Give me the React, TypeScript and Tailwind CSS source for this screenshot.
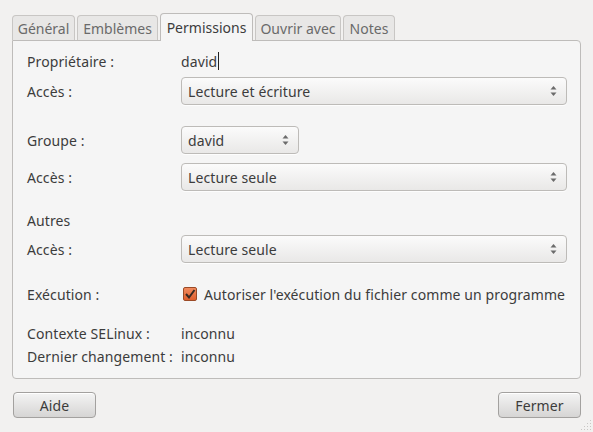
import React from "react";

const font = { fontFamily: '"Noto Sans", "Open Sans", sans-serif' };

function Arrows() {
  return (
    <svg width="7" height="12" viewBox="0 0 7 12" className="shrink-0">
      <path d="M3.5 1 L6.5 4.5 L0.5 4.5 Z" fill="#6b6b6b" />
      <path d="M3.5 11 L6.5 7.5 L0.5 7.5 Z" fill="#6b6b6b" />
    </svg>
  );
}

function Combo({ value, wide = true }: { value: string; wide?: boolean }) {
  return (
    <div
      className={`h-[28px] ${wide ? "w-[386px]" : "w-[118px]"} flex items-center justify-between pl-[6px] pr-[9px] rounded-[4px] border border-[#bdbbb8] bg-gradient-to-b from-[#fbfbfb] to-[#e9e8e7] shadow-[0_1px_0_rgba(255,255,255,0.8)]`}
    >
      <span className="text-[#3c3c3c]">{value}</span>
      <Arrows />
    </div>
  );
}

function Tab({ label, w, active = false }: { label: string; w: string; active?: boolean }) {
  if (active) {
    return (
      <div className={`${w} h-[28px] -mb-px relative z-10 flex items-center justify-center rounded-t-[4px] border border-b-0 border-[#bebcba] bg-[#f5f5f5] text-[#3c3c3c] tracking-normal`}>
        {label}
      </div>
    );
  }
  return (
    <div className={`${w} h-[25px] flex items-center justify-center rounded-t-[4px] border border-b-0 border-[#c8c6c4] bg-[#e8e7e6] text-[#6a6a6a] tracking-normal`}>
      {label}
    </div>
  );
}

function Row({ label, children, h = "h-[24px]" }: { label: string; children?: React.ReactNode; h?: string }) {
  return (
    <div className={`flex items-center ${h}`}>
      <div className="w-[154px] shrink-0">{label}</div>
      {children}
    </div>
  );
}

export default function App() {
  return (
    <div
      className="w-[593px] h-[432px] bg-[#f2f1f0] text-[14px] tracking-[0.1px] text-[#3c3c3c] overflow-hidden relative"
      style={font}
    >
      <div className="pt-[12px] px-[12px]">
        {/* Tabs */}
        <div className="flex items-end gap-[2px] h-[28px]">
          <Tab label="Général" w="w-[63px]" />
          <Tab label="Emblèmes" w="w-[81px]" />
          <Tab label="Permissions" w="w-[93px]" active />
          <Tab label="Ouvrir avec" w="w-[86px]" />
          <Tab label="Notes" w="w-[52px]" />
        </div>

        {/* Panel */}
        <div className="w-[569px] h-[339px] border border-[#bebcba] rounded-b-[4px] rounded-tr-[4px] bg-[#f5f5f5] pl-[14px] pt-[8px] flex flex-col">
          <Row label="Propriétaire :">
            <span className="flex items-center">
              david
              <span className="inline-block w-px h-[18px] bg-[#222] ml-[1px]" />
            </span>
          </Row>
          <Row label="Accès :" h="h-[28px] mt-[4px]">
            <Combo value="Lecture et écriture" />
          </Row>

          <Row label="Groupe :" h="h-[28px] mt-[21px]">
            <Combo value="david" wide={false} />
          </Row>
          <Row label="Accès :" h="h-[28px] mt-[9px]">
            <Combo value="Lecture seule" />
          </Row>

          <Row label="Autres" h="h-[24px] mt-[17px]" />
          <Row label="Accès :" h="h-[28px] mt-[3px]">
            <Combo value="Lecture seule" />
          </Row>

          <Row label="Exécution :" h="h-[24px] mt-[19px]">
            <div className="flex items-center gap-[7px] ml-[2px]">
              <div className="w-[14px] h-[14px] rounded-[2px] border border-[#9b4a26] bg-gradient-to-b from-[#f08a5d] to-[#df5f2c] flex items-center justify-center">
                <svg width="12" height="12" viewBox="0 0 12 12">
                  <path d="M2 6 L5 9.5 L10.5 2" stroke="#3a2a22" strokeWidth="2" fill="none" />
                </svg>
              </div>
              <span>Autoriser l'exécution du fichier comme un programme</span>
            </div>
          </Row>

          <Row label="Contexte SELinux :" h="h-[22px] mt-[16px]">
            <span>inconnu</span>
          </Row>
          <Row label="Dernier changement :" h="h-[22px] mt-px">
            <span>inconnu</span>
          </Row>
        </div>

        {/* Buttons */}
        <div className="flex justify-between mt-[13px] pl-px">
          <button className="w-[83px] h-[26px] rounded-[4px] border border-[#a3a19f] bg-gradient-to-b from-[#f4f4f4] to-[#d6d5d4] text-[#3c3c3c] shadow-[inset_0_1px_0_#ffffff]">
            Aide
          </button>
          <button className="w-[83px] h-[26px] rounded-[4px] border border-[#a3a19f] bg-gradient-to-b from-[#f4f4f4] to-[#d6d5d4] text-[#3c3c3c] shadow-[inset_0_1px_0_#ffffff]">
            Fermer
          </button>
        </div>
      </div>

      {/* resize grip */}
      <svg width="12" height="12" viewBox="0 0 12 12" className="absolute right-[1px] bottom-[1px]">
        {[
          [10, 2], [10, 5], [10, 8], [10, 11],
          [7, 5], [7, 8], [7, 11],
          [4, 8], [4, 11],
          [1, 11],
        ].map(([x, y], i) => (
          <rect key={i} x={x} y={y - 1} width="1" height="1" fill="#c9c7c5" />
        ))}
      </svg>
    </div>
  );
}
